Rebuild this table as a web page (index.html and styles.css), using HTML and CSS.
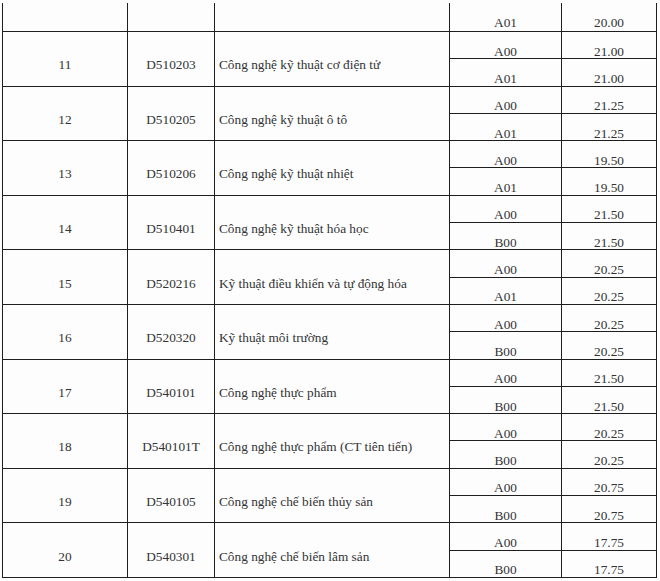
FILE: index.html
```html
<!DOCTYPE html>
<html lang="vi">
<head>
<meta charset="utf-8">
<title>Điểm chuẩn</title>
<link rel="stylesheet" href="styles.css">
</head>
<body>
<div class="table">
  <div class="cell top"></div><div class="cell top"></div><div class="cell top"></div>
  <div class="cell c top">A01</div><div class="cell c top">20.00</div>

  <div class="cell c g">11</div><div class="cell c g">D510203</div><div class="cell l g">Công nghệ kỹ thuật cơ điện tử</div>
  <div class="cell c">A00</div><div class="cell c">21.00</div><div class="cell c">A01</div><div class="cell c">21.00</div>

  <div class="cell c g">12</div><div class="cell c g">D510205</div><div class="cell l g">Công nghệ kỹ thuật ô tô</div>
  <div class="cell c">A00</div><div class="cell c">21.25</div><div class="cell c">A01</div><div class="cell c">21.25</div>

  <div class="cell c g">13</div><div class="cell c g">D510206</div><div class="cell l g">Công nghệ kỹ thuật nhiệt</div>
  <div class="cell c">A00</div><div class="cell c">19.50</div><div class="cell c">A01</div><div class="cell c">19.50</div>

  <div class="cell c g">14</div><div class="cell c g">D510401</div><div class="cell l g">Công nghệ kỹ thuật hóa học</div>
  <div class="cell c">A00</div><div class="cell c">21.50</div><div class="cell c">B00</div><div class="cell c">21.50</div>

  <div class="cell c g">15</div><div class="cell c g">D520216</div><div class="cell l g">Kỹ thuật điều khiển và tự động hóa</div>
  <div class="cell c">A00</div><div class="cell c">20.25</div><div class="cell c">A01</div><div class="cell c">20.25</div>

  <div class="cell c g">16</div><div class="cell c g">D520320</div><div class="cell l g">Kỹ thuật môi trường</div>
  <div class="cell c">A00</div><div class="cell c">20.25</div><div class="cell c">B00</div><div class="cell c">20.25</div>

  <div class="cell c g">17</div><div class="cell c g">D540101</div><div class="cell l g">Công nghệ thực phẩm</div>
  <div class="cell c">A00</div><div class="cell c">21.50</div><div class="cell c">B00</div><div class="cell c">21.50</div>

  <div class="cell c g">18</div><div class="cell c g">D540101T</div><div class="cell l g">Công nghệ thực phẩm (CT tiên tiến)</div>
  <div class="cell c">A00</div><div class="cell c">20.25</div><div class="cell c">B00</div><div class="cell c">20.25</div>

  <div class="cell c g">19</div><div class="cell c g">D540105</div><div class="cell l g">Công nghệ chế biến thủy sản</div>
  <div class="cell c">A00</div><div class="cell c">20.75</div><div class="cell c">B00</div><div class="cell c">20.75</div>

  <div class="cell c g">20</div><div class="cell c g">D540301</div><div class="cell l g">Công nghệ chế biến lâm sản</div>
  <div class="cell c">A00</div><div class="cell c">17.75</div><div class="cell c">B00</div><div class="cell c">17.75</div>
</div>
</body>
</html>
```
FILE: styles.css
```css
html, body {
  margin: 0;
  padding: 0;
  background: #fdfdfd;
}

body {
  font-family: "Liberation Serif", "Times New Roman", serif;
  font-size: 13.3px;
  color: #333333;
}

.table {
  display: grid;
  grid-template-columns: 124px 86px 234px 111px 94px;
  grid-template-rows: 28px repeat(20, 26.3px);
  gap: 1px;
  padding: 0 1px 1px 1px;
  margin: 3px 0 0 2px;
  width: max-content;
  background: #1e1e1e;
}

.cell {
  background: #fdfdfd;
  display: flex;
  align-items: center;
  padding-top: 12px;
  line-height: 15px;
  white-space: nowrap;
  overflow: visible;
}

.top {
  padding-top: 10px;
}

.c {
  justify-content: center;
}

.l {
  justify-content: flex-start;
  padding-left: 4px;
}

.g {
  grid-row: span 2;
}
```
